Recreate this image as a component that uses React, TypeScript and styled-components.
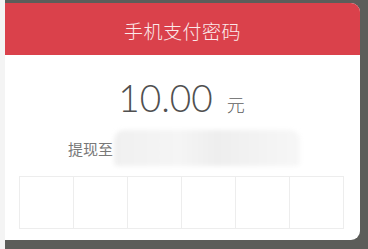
import React from 'react';
import styled, { createGlobalStyle } from 'styled-components';

const GlobalStyle = createGlobalStyle`
  html, body {
    margin: 0;
    padding: 0;
    width: 368px;
    height: 249px;
    overflow: hidden;
    background: #5c5d5a;
  }
  * { box-sizing: border-box; }
`;

const Page = styled.div`
  display: flex;
  width: 368px;
  height: 249px;
`;

const EdgeStrip = styled.div`
  width: 5px;
  background: #f4f4f4;
`;

const Stage = styled.div`
  flex: 1;
  padding: 3px 8px 9px 0;
  display: flex;
`;

const Card = styled.div`
  flex: 1;
  display: flex;
  flex-direction: column;
  background: #ffffff;
  border-radius: 0 9px 9px 0;
  overflow: hidden;
  font-family: "Noto Sans CJK SC", "Noto Sans", sans-serif;
`;

const Header = styled.div`
  height: 52px;
  display: flex;
  align-items: center;
  justify-content: center;
  background: #da414b;
  color: #fbe9ea;
  font-size: 19px;
  font-weight: 300;
  letter-spacing: 0.5px;
  padding-top: 2px;
`;

const AmountRow = styled.div`
  display: flex;
  justify-content: center;
  align-items: baseline;
  gap: 14px;
  margin-top: 25px;
  padding-right: 2px;
`;

const Amount = styled.span`
  font-family: Lato, Roboto, sans-serif;
  font-weight: 300;
  font-size: 37px;
  line-height: 36px;
  color: #505050;
`;

const Unit = styled.span`
  font-size: 18px;
  line-height: 18px;
  color: #606060;
  font-weight: 300;
`;

const TargetRow = styled.div`
  display: flex;
  align-items: center;
  height: 38px;
  margin-top: 13px;
  padding-left: 63px;
`;

const TargetLabel = styled.span`
  font-size: 15px;
  line-height: 15px;
  color: #787878;
`;

const Masked = styled.span`
  display: inline-block;
  width: 186px;
  height: 36px;
  margin-left: 1px;
  background: linear-gradient(90deg, #f0f0f0 0%, #f5f5f5 35%, #eeeeee 55%, #f1f1f1 70%, #f7f7f7 100%);
  filter: blur(2px);
  border-radius: 10px 10px 4px 4px;
`;

const PinGrid = styled.div`
  display: grid;
  grid-template-columns: repeat(6, 54px);
  height: 53px;
  margin: 9px 0 0 14px;
  border: 1px solid #ededed;
  width: 325px;
`;

const PinCell = styled.div<{ $last?: boolean }>`
  border-right: ${(p) => (p.$last ? 'none' : '1px solid #ededed')};
`;

export default function App() {
  const cells = [0, 1, 2, 3, 4, 5];
  return (
    <>
      <GlobalStyle />
      <Page>
        <EdgeStrip />
        <Stage>
          <Card>
            <Header>手机支付密码</Header>
            <AmountRow>
              <Amount>10.00</Amount>
              <Unit>元</Unit>
            </AmountRow>
            <TargetRow>
              <TargetLabel>提现至</TargetLabel>
              <Masked />
            </TargetRow>
            <PinGrid>
              {cells.map((i) => (
                <PinCell key={i} $last={i === cells.length - 1} />
              ))}
            </PinGrid>
          </Card>
        </Stage>
      </Page>
    </>
  );
}
